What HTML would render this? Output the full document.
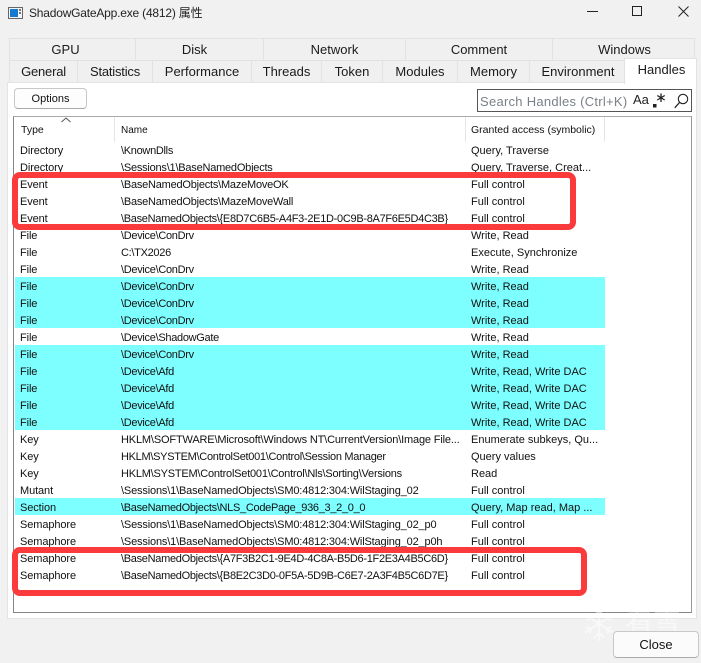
<!DOCTYPE html>
<html><head><meta charset="utf-8"><style>
html,body{margin:0;padding:0;width:701px;height:663px;overflow:hidden;background:#f1f1f1;font-family:"Liberation Sans","Noto Sans CJK SC",sans-serif;color:#111}
div,span,svg{position:absolute;white-space:nowrap}
.tab{background:#f0f0f0;border:1px solid #e2e2e2;border-bottom:none;box-sizing:border-box;text-align:center;font-size:13px;color:#1a1a1a}
.r{left:1px;width:590px;height:17px;line-height:17px;font-size:11px}
.c{background:#7dffff}
.r span{top:2px}
.a{left:5px;letter-spacing:-.1px}.b{left:106px;letter-spacing:-.3px}.d{left:456px}
.r .w{letter-spacing:-.16px}
.r .m{letter-spacing:-.22px}
.box{border:6px solid #fb3a3c;border-radius:8px;box-sizing:border-box}
</style></head><body>
<svg style="left:8px;top:7px" width="15" height="12" viewBox="0 0 15 12"><rect x=".5" y=".5" width="14" height="11" fill="#f4f4f4" stroke="#666"/><rect x="2" y="2" width="8" height="8" fill="#1479d0"/><rect x="11" y="2" width="2" height="2" fill="#777"/><rect x="11" y="5" width="2" height="2" fill="#777"/></svg>
<div style="left:29px;top:4px;font-size:12px;letter-spacing:-.2px;line-height:18px;color:#222">ShadowGateApp.exe (4812) 属性</div>
<svg style="left:580px;top:0" width="121" height="24" viewBox="0 0 121 24" fill="none" stroke="#222" stroke-width="1"><path d="M7 11.500H18"/><rect x="52.500" y="6.500" width="9" height="9"/><path d="M98.500 6.500L108.500 16.500M108.500 6.500L98.500 16.500"/></svg>

<div class="tab" style="left:9px;top:38px;width:127px;height:23px;line-height:21px;padding-right:14px">GPU</div>
<div class="tab" style="left:135px;top:38px;width:129px;height:23px;line-height:21px;padding-right:10px">Disk</div>
<div class="tab" style="left:263px;top:38px;width:143px;height:23px;line-height:21px">Network</div>
<div class="tab" style="left:405px;top:38px;width:148px;height:23px;line-height:21px">Comment</div>
<div class="tab" style="left:552px;top:38px;width:143px;height:23px;line-height:21px;padding-left:2px">Windows</div>
<div class="tab" style="left:9px;top:60px;width:69px;height:23px;line-height:21px;letter-spacing:-.2px">General</div>
<div class="tab" style="left:77px;top:60px;width:76px;height:23px;line-height:21px;letter-spacing:-.2px">Statistics</div>
<div class="tab" style="left:152px;top:60px;width:100px;height:23px;line-height:21px">Performance</div>
<div class="tab" style="left:251px;top:60px;width:71px;height:23px;line-height:21px">Threads</div>
<div class="tab" style="left:321px;top:60px;width:62px;height:23px;line-height:21px">Token</div>
<div class="tab" style="left:382px;top:60px;width:76px;height:23px;line-height:21px">Modules</div>
<div class="tab" style="left:457px;top:60px;width:73px;height:23px;line-height:21px">Memory</div>
<div class="tab" style="left:529px;top:60px;width:96px;height:23px;line-height:21px;padding-left:2px">Environment</div>

<div style="left:7px;top:82px;width:690px;height:537px;background:#fff;border:1px solid #e4e4e4;box-sizing:border-box"></div>
<div class="tab" style="left:624px;top:58px;width:73px;height:26px;line-height:21px;background:#fff;z-index:2;padding-left:2px">Handles</div>

<div style="left:14px;top:88px;width:73px;height:21px;border:1px solid #c8c8c8;border-bottom-color:#a8a8a8;border-radius:4px;box-sizing:border-box;background:#fdfdfd;text-align:center;font-size:11px;line-height:21px">Options</div>

<div style="left:477px;top:89px;width:215px;height:23px;border:1px solid #555;box-sizing:border-box;background:#fff"></div>
<div style="left:480px;top:93px;font-size:13px;letter-spacing:.27px;line-height:18px;color:#7a8088">Search Handles (Ctrl+K)</div>
<div style="left:633px;top:92px;font-size:13px;line-height:16px;color:#222">Aa</div>
<svg style="left:652px;top:92px" width="38" height="18" viewBox="0 0 38 18" fill="none" stroke="#222"><rect x="1" y="12" width="3.500" height="3.500" fill="#222" stroke="none"/><path d="M9 1.500V10M5.300 3.500L12.700 8M12.700 3.500L5.300 8" stroke-width="1.300"/><circle cx="31" cy="7" r="4.700" stroke-width="1.100"/><path d="M27.500 10.500L22.800 15.800" stroke-width="1.300"/></svg>

<div style="left:13px;top:116px;width:679px;height:497px;border:1px solid #858585;border-right-color:#999;border-top-color:#aaa;box-sizing:border-box;background:#fff;overflow:hidden">
<div style="left:100px;top:0;width:1px;height:25px;background:#e5e5e5"></div>
<div style="left:451px;top:0;width:1px;height:25px;background:#e5e5e5"></div>
<div style="left:590px;top:0;width:1px;height:25px;background:#e5e5e5"></div>
<svg style="left:46px;top:0" width="12" height="6" viewBox="0 0 12 6" fill="none" stroke="#555"><path d="M1.500 5L6 1L10.500 5"/></svg>
<div style="left:7px;top:5px;font-size:10.500px;line-height:16px">Type</div>
<div style="left:107px;top:6px;font-size:10px;line-height:16px">Name</div>
<div style="left:457px;top:5px;font-size:10.500px;line-height:16px">Granted access (symbolic)</div>

<div class="r" style="top:24px"><span class="a">Directory</span><span class="b">\KnownDlls</span><span class="d">Query, Traverse</span></div>
<div class="r" style="top:41px"><span class="a">Directory</span><span class="b m">\Sessions\1\BaseNamedObjects</span><span class="d">Query, Traverse, Creat...</span></div>
<div class="r" style="top:58px"><span class="a">Event</span><span class="b m">\BaseNamedObjects\MazeMoveOK</span><span class="d">Full control</span></div>
<div class="r" style="top:75px"><span class="a">Event</span><span class="b m">\BaseNamedObjects\MazeMoveWall</span><span class="d">Full control</span></div>
<div class="r" style="top:92px"><span class="a">Event</span><span class="b">\BaseNamedObjects\{E8D7C6B5-A4F3-2E1D-0C9B-8A7F6E5D4C3B}</span><span class="d">Full control</span></div>
<div class="r" style="top:109px"><span class="a">File</span><span class="b">\Device\ConDrv</span><span class="d">Write, Read</span></div>
<div class="r" style="top:126px"><span class="a">File</span><span class="b">C:\TX2026</span><span class="d">Execute, Synchronize</span></div>
<div class="r" style="top:143px"><span class="a">File</span><span class="b">\Device\ConDrv</span><span class="d">Write, Read</span></div>
<div class="r c" style="top:160px"><span class="a">File</span><span class="b">\Device\ConDrv</span><span class="d">Write, Read</span></div>
<div class="r c" style="top:177px"><span class="a">File</span><span class="b">\Device\ConDrv</span><span class="d">Write, Read</span></div>
<div class="r c" style="top:194px"><span class="a">File</span><span class="b">\Device\ConDrv</span><span class="d">Write, Read</span></div>
<div class="r" style="top:211px"><span class="a">File</span><span class="b">\Device\ShadowGate</span><span class="d">Write, Read</span></div>
<div class="r c" style="top:228px"><span class="a">File</span><span class="b">\Device\ConDrv</span><span class="d">Write, Read</span></div>
<div class="r c" style="top:245px"><span class="a">File</span><span class="b">\Device\Afd</span><span class="d">Write, Read, Write DAC</span></div>
<div class="r c" style="top:262px"><span class="a">File</span><span class="b">\Device\Afd</span><span class="d">Write, Read, Write DAC</span></div>
<div class="r c" style="top:279px"><span class="a">File</span><span class="b">\Device\Afd</span><span class="d">Write, Read, Write DAC</span></div>
<div class="r c" style="top:296px"><span class="a">File</span><span class="b">\Device\Afd</span><span class="d">Write, Read, Write DAC</span></div>
<div class="r" style="top:313px"><span class="a">Key</span><span class="b w">HKLM\SOFTWARE\Microsoft\Windows NT\CurrentVersion\Image File...</span><span class="d">Enumerate subkeys, Qu...</span></div>
<div class="r" style="top:330px"><span class="a">Key</span><span class="b">HKLM\SYSTEM\ControlSet001\Control\Session Manager</span><span class="d">Query values</span></div>
<div class="r" style="top:347px"><span class="a">Key</span><span class="b m">HKLM\SYSTEM\ControlSet001\Control\Nls\Sorting\Versions</span><span class="d">Read</span></div>
<div class="r" style="top:364px"><span class="a">Mutant</span><span class="b w">\Sessions\1\BaseNamedObjects\SM0:4812:304:WilStaging_02</span><span class="d">Full control</span></div>
<div class="r c" style="top:381px"><span class="a">Section</span><span class="b">\BaseNamedObjects\NLS_CodePage_936_3_2_0_0</span><span class="d">Query, Map read, Map ...</span></div>
<div class="r" style="top:398px"><span class="a">Semaphore</span><span class="b w">\Sessions\1\BaseNamedObjects\SM0:4812:304:WilStaging_02_p0</span><span class="d">Full control</span></div>
<div class="r" style="top:415px"><span class="a">Semaphore</span><span class="b w">\Sessions\1\BaseNamedObjects\SM0:4812:304:WilStaging_02_p0h</span><span class="d">Full control</span></div>
<div class="r" style="top:432px"><span class="a">Semaphore</span><span class="b">\BaseNamedObjects\{A7F3B2C1-9E4D-4C8A-B5D6-1F2E3A4B5C6D}</span><span class="d">Full control</span></div>
<div class="r" style="top:449px"><span class="a">Semaphore</span><span class="b">\BaseNamedObjects\{B8E2C3D0-0F5A-5D9B-C6E7-2A3F4B5C6D7E}</span><span class="d">Full control</span></div>
</div>

<div class="box" style="left:12px;top:172px;width:564px;height:58px"></div>
<div class="box" style="left:12px;top:547px;width:575px;height:49px"></div>

<svg style="left:583px;top:605px" width="32" height="37" viewBox="0 0 32 37" fill="none" stroke="#fff" stroke-width="2" opacity=".5"><path d="M16 1V36M2 9.500L30 27.500M30 9.500L2 27.500M11 4L16 9L21 4M11 33L16 28L21 33M3 15L8 13L7 8M29 15L24 13L25 8M3 22L8 24L7 29M29 22L24 24L25 29"/></svg>
<div style="left:625px;top:606px;font-size:28px;line-height:32px;color:#fff;opacity:.5">看雪</div>

<div style="left:613px;top:631px;width:86px;height:27px;border:1px solid #c8c8c8;border-bottom-color:#aaa;border-radius:4px;box-sizing:border-box;background:#fbfbfb;text-align:center;font-size:13px;line-height:25px">Close</div>
</body></html>
